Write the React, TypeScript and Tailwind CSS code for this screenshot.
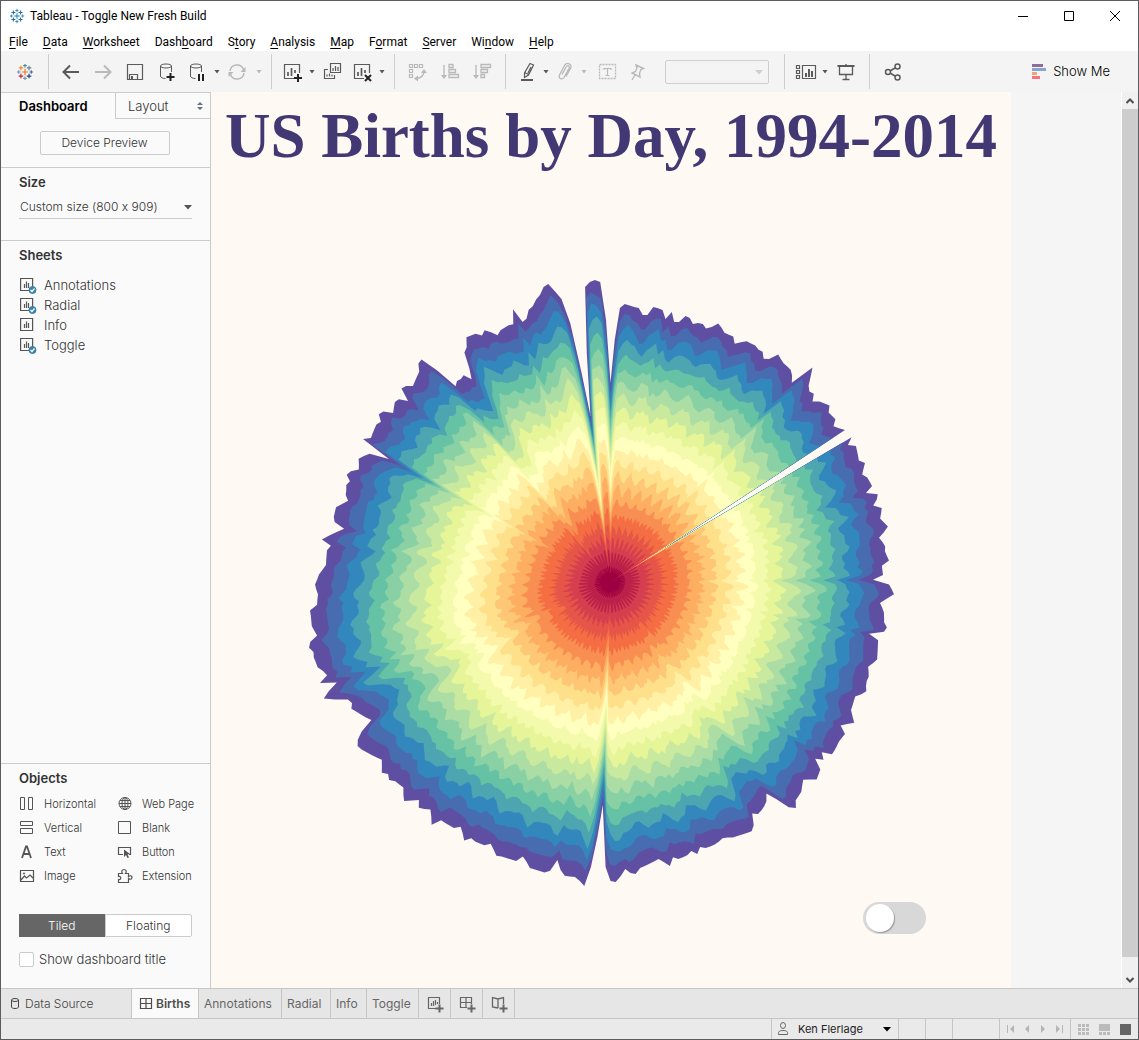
import React, { useState } from 'react';

/* ---------- radial chart data ---------- */

const YEARS = [1994, 1995, 1996, 1997, 1998, 1999, 2000, 2001, 2002, 2003, 2004, 2005, 2006, 2007, 2008, 2009, 2010, 2011, 2012, 2013, 2014];

const SPECTRAL = [
  '#9e0142', '#ba2049', '#d53e4f', '#e55649', '#f46d43', '#f98e52', '#fdae61',
  '#fec776', '#fee08b', '#fff0a5', '#ffffbf', '#f3faac', '#e6f598', '#c9e99e',
  '#abdda4', '#89d0a5', '#66c2a5', '#4ca5b1', '#3288bd', '#486cb0', '#5e4fa2',
];

const CX = 310.5;
const CY = 312;

// totals for all years, as points on the outer edge, clockwise from Jan 1
const OUTER: number[][] = [
  [311, 113], [316, 70], [321, 38], [325, 34], [334, 37], [339, 38], [343, 45], [348, 45], [354, 37], [363, 40],
  [366, 49], [372, 42], [374, 52], [379, 52], [386, 46], [390, 48], [393, 54], [398, 53], [403, 54], [407, 59],
  [419, 54], [425, 63], [434, 67], [435, 74], [442, 73], [448, 72], [456, 76], [459, 80], [463, 82], [464, 89],
  [469, 89], [479, 85], [482, 92], [482, 96], [488, 97], [492, 101], [492, 113], [513, 98], [508, 115], [509, 121],
  [514, 124], [513, 132], [520, 132], [529, 135], [529, 143], [536, 150], [534, 157], [545, 160], [552, 168], [548, 175],
  [556, 176], [559, 191], [565, 193], [562, 204], [567, 207], [572, 216], [566, 223], [578, 225], [577, 230], [573, 235],
  [582, 239], [580, 248], [588, 257], [579, 268], [585, 275], [585, 282], [589, 291], [582, 298], [583, 305], [573, 310],
  [589, 314], [594, 324], [580, 333], [584, 342], [584, 353], [587, 357], [584, 362], [569, 364], [578, 371], [577, 390],
  [568, 397], [569, 406], [566, 413], [566, 422], [555, 427], [551, 440], [554, 453], [541, 455], [545, 464], [540, 470],
  [533, 483], [522, 482], [524, 489], [515, 489], [520, 500], [517, 509], [503, 510], [501, 522], [496, 530], [496, 538],
  [489, 537], [467, 523], [466, 535], [458, 544], [453, 543], [454, 555], [452, 561], [434, 567], [423, 568], [416, 574],
  [406, 578], [400, 577], [397, 584], [391, 581], [388, 585], [379, 589], [374, 587], [370, 596], [359, 589], [340, 598],
  [336, 604], [332, 603], [326, 599], [316, 612], [311, 611], [307, 597], [305, 560], [303, 535], [298, 567], [292, 597],
  [285, 616], [276, 607], [266, 606], [261, 600], [258, 590], [251, 601], [243, 602], [230, 598], [224, 587], [216, 591],
  [203, 587], [197, 586], [191, 574], [186, 576], [174, 571], [171, 568], [165, 571], [161, 557], [154, 558], [142, 551],
  [132, 555], [131, 540], [119, 538], [119, 530], [104, 531], [103, 517], [96, 512], [90, 511], [88, 504], [82, 503],
  [82, 490], [59, 478], [58, 470], [62, 462], [72, 451], [51, 438], [52, 433], [48, 430], [24, 429], [23, 427],
  [37, 413], [20, 413], [27, 405], [17, 395], [14, 388], [13, 380], [9, 377], [10, 371], [17, 365], [12, 357],
  [11, 347], [10, 340], [17, 333], [18, 325], [15, 315], [19, 305], [26, 295], [27, 280], [31, 275], [22, 269],
  [44, 259], [35, 250], [34, 246], [36, 237], [48, 231], [46, 224], [47, 213], [50, 211], [47, 204], [51, 201],
  [59, 199], [59, 188], [65, 184], [70, 183], [89, 189], [63, 169], [71, 168], [76, 155], [80, 153], [79, 144],
  [83, 142], [93, 143], [95, 132], [99, 129], [108, 131], [102, 118], [106, 116], [113, 116], [119, 102], [119, 93],
  [122, 89], [156, 116], [157, 111], [161, 109], [164, 105], [172, 109], [170, 98], [165, 82], [167, 77], [167, 67],
  [175, 64], [183, 65], [185, 60], [198, 65], [201, 60], [209, 55], [214, 54], [214, 39], [223, 52], [226, 49],
  [231, 39], [238, 29], [244, 17], [248, 14], [262, 29], [271, 53], [282, 103], [291, 146], [287, 83], [286, 17],
  [292, 12], [296, 10], [301, 12], [307, 50],
];

const DAYS = 366;
const FEB_29 = 59;

const polar = OUTER.map(([x, y], i) => {
  let day = (Math.atan2(x - CX, CY - y) / (2 * Math.PI)) * DAYS;
  if (day < 0 && i > 0) day += DAYS;
  return { day, r: Math.hypot(x - CX, y - CY) };
}).sort((a, b) => a.day - b.day);

function radiusAt(day: number) {
  const near = polar.find((p) => Math.abs(p.day - day) < 0.5);
  if (near) return near.r;
  const after = polar.find((p) => p.day > day) ?? { day: DAYS, r: polar[0].r };
  const before = [...polar].reverse().find((p) => p.day <= day) ?? polar[0];
  const t = (day - before.day) / (after.day - before.day || 1);
  return before.r + (after.r - before.r) * t;
}

const WEEKDAY = [0.7, 1.04, 1.13, 1.12, 1.12, 1.11, 0.78];

function birthsOn(year: number, day: number) {
  const leap = year % 4 === 0;
  if (day === FEB_29 && !leap) return 0;
  const date = new Date(Date.UTC(2000, 0, 1 + day));
  const m = date.getUTCMonth();
  const d = date.getUTCDate();
  const dow = new Date(Date.UTC(year, m, d)).getUTCDay();
  if ((m === 0 && d === 1) || (m === 6 && d === 4) || (m === 11 && d === 25)) return 0.6;
  if (m === 8 && dow === 1 && d <= 7) return 0.7; // Labor Day
  if (m === 4 && dow === 1 && d >= 25) return 0.7; // Memorial Day
  if (m === 10 && dow === 4 && d >= 22 && d <= 28) return 0.65; // Thanksgiving
  if (m === 10 && dow === 5 && d >= 23 && d <= 29) return 0.8;
  return WEEKDAY[dow];
}

const rings: string[] = YEARS.map(() => '');
for (let day = 0; day < DAYS; day++) {
  const births = YEARS.map((y) => birthsOn(y, day));
  const total = births.reduce((a, b) => a + b, 0);
  const outer = day === FEB_29 ? 66 : radiusAt(day);
  const angle = (day / DAYS) * 2 * Math.PI;
  let sum = 0;
  births.forEach((b, i) => {
    sum += b;
    const r = (outer * sum) / total;
    rings[i] += `${(CX + r * Math.sin(angle)).toFixed(1)},${(CY - r * Math.cos(angle)).toFixed(1)} `;
  });
}

function RadialChart() {
  return (
    <svg viewBox="11 0 600 630" className="mx-auto block w-[600px] max-w-full overflow-visible" role="img" aria-label="Radial">
      {rings
        .map((points, i) => <polygon key={YEARS[i]} points={points} fill={SPECTRAL[i]} />)
        .reverse()}
    </svg>
  );
}

/* ---------- icons ---------- */

type IconProps = { children: React.ReactNode; size?: string; box?: string };

function Icon({ children, size = 'size-5', box = '0 0 20 20' }: IconProps) {
  return (
    <svg viewBox={box} className={`${size} shrink-0`} fill="none" stroke="currentColor" aria-hidden="true">
      {children}
    </svg>
  );
}

function TableauMark({ colors, size }: { colors: string[]; size: string }) {
  const arms = [
    [10, 10, 3.5], [10, 3, 2], [10, 17, 2], [3, 10, 2], [17, 10, 2],
    [5.5, 5.5, 2.5], [14.5, 5.5, 2.5], [5.5, 14.5, 2.5], [14.5, 14.5, 2.5],
  ];
  return (
    <svg viewBox="0 0 20 20" className={size} aria-hidden="true" strokeWidth="1.3">
      {arms.map(([x, y, s], i) => (
        <path key={i} d={`M${x - s} ${y}h${s * 2}M${x} ${y - s}v${s * 2}`} stroke={colors[i]} />
      ))}
    </svg>
  );
}

const BLUE_MARK = ['#2f7fb8', '#4b8fb5', '#4b8fb5', '#4b8fb5', '#4b8fb5', '#1f6fa3', '#1f6fa3', '#1f6fa3', '#1f6fa3'];
const COLOR_MARK = ['#e8762c', '#5b879b', '#7199a6', '#7d8fc0', '#5b6591', '#eb912c', '#59879b', '#c72035', '#1f447e'];

const BackIcon = () => <Icon><path strokeWidth="2" d="M17 10H2M8 3.500L1.500 10 8 16.500" /></Icon>;
const ForwardIcon = () => <Icon><path strokeWidth="2" d="M1 10h15M10 3.500l6.500 6.500-6.500 6.500" /></Icon>;
const SaveIcon = () => (
  <Icon>
    <path strokeWidth="1.200" d="M1.500 2.500h15v15h-15zM3.500 17v-4.500h8V17" />
    <path d="M5 14h2v3H5z" fill="currentColor" stroke="none" />
  </Icon>
);
const Cylinder = () => (
  <>
    <ellipse cx="8" cy="4" rx="5.500" ry="2" />
    <path d="M2.500 4v10c0 1.500 2 2.500 5 2.500M13.500 4v6" />
  </>
);
const AddDataIcon = () => <Icon><Cylinder /><path stroke="#222" strokeWidth="2" d="M8.500 15h8M12.500 11v8" /></Icon>;
const PauseDataIcon = () => <Icon><Cylinder /><path stroke="#222" strokeWidth="2" d="M11 12v7M15 12v7" /></Icon>;
const RefreshIcon = () => (
  <Icon>
    <path strokeWidth="1.500" d="M2 9a7 7 0 0 1 13.500-1.500M16 11a7 7 0 0 1-13.500 1.500" />
    <path d="M17.500 5v5h-5zM.5 15v-5h5z" fill="currentColor" stroke="none" />
  </Icon>
);
const BarsInFrame = () => (
  <>
    <path strokeWidth="1.200" d="M11 16.500H1.500v-14h15V11" />
    <path strokeWidth="1.700" d="M5 10v4M8.500 6v8M12 8v3" />
  </>
);
const NewSheetIcon = () => <Icon><BarsInFrame /><path stroke="#222" strokeWidth="2" d="M11 16h8M15 12v8" /></Icon>;
const ClearSheetIcon = () => <Icon><BarsInFrame /><path stroke="#222" strokeWidth="2" d="M12 13l6 6M18 13l-6 6" /></Icon>;
const DuplicateIcon = () => (
  <Icon>
    <path strokeWidth="1.200" d="M7.500 1.500h10v9h-10zM5 7.500H1.500v9h10V13M10 6v3M12.500 4v5M15 5v4M4 12.500v2M6.500 11.500v3M9 12.500v2" />
  </Icon>
);
const SwapIcon = () => (
  <Icon>
    <path strokeWidth="1.200" d="M1.500 2.500h3v3h-3zM6.500 2.500h3v3h-3zM11.500 2.500h3v3h-3zM1.500 7.500h3v3h-3zM1.500 12.500h3v3h-3z" />
    <path strokeWidth="1.500" d="M16 9c0 4-3 7-8 7.500" />
    <path d="M13 11l3-4 3 4zM10 13.500v6L6 16.500z" fill="currentColor" stroke="none" />
  </Icon>
);
const SortAscIcon = () => (
  <Icon>
    <path strokeWidth="1.300" d="M4 3v12M9 2.500h4v3H9zM9 7.500h6.500v3H9zM9 12.500h9.500v3H9z" />
    <path d="M1 13h6l-3 4z" fill="currentColor" stroke="none" />
  </Icon>
);
const SortDescIcon = () => (
  <Icon>
    <path strokeWidth="1.300" d="M4 3v12M9 2.500h9.500v3H9zM9 7.500h6.500v3H9zM9 12.500h3.500v3H9z" />
    <path d="M1 13h6l-3 4z" fill="currentColor" stroke="none" />
  </Icon>
);
const HighlightIcon = () => (
  <Icon>
    <path strokeWidth="1.200" d="M13 1.500l3.500 1.500-5 10-4 2.500v-4.500zM7.500 10.500l4 2M14 5l-3 6" />
    <path strokeWidth="2" d="M4 18h12" />
  </Icon>
);
const ClipIcon = () => (
  <Icon>
    <path
      strokeWidth="1.300"
      d="M7 12.500l4-7.500c1.500-2.500 4-1 3 1.500l-5 9c-1.500 2.500-6 1.500-4.500-2.500l5-9.500c2.500-4 8-1.500 6 3l-4.500 8"
    />
  </Icon>
);
const TextBoxIcon = () => (
  <Icon size="h-5 w-[22px]" box="0 0 22 20">
    <path strokeWidth="1.300" strokeDasharray="2 1" d="M3.500 2.500h16v14h-16z" />
    <path strokeWidth="1.200" d="M8 8V6.500h7V8M11.500 6.500v7M9.500 13.500h4" />
  </Icon>
);
const PinIcon = () => (
  <Icon>
    <path strokeWidth="1.400" d="M9 3l7.500 3.500-2.500 1-1.500 3.500.5 4-8-4 3.500-1.500L10 6zM8 13l-3 5" />
  </Icon>
);
const FitIcon = () => (
  <Icon size="h-5 w-6" box="0 0 24 20">
    <path strokeWidth="1.200" d="M2.500 3.500h3v3h-3zM2.500 8.500h3v3h-3zM2.500 13.500h3v3h-3zM8.500 3.500h13v13h-13z" />
    <path strokeWidth="2" d="M12 11v4M15 7v8M18 9v6" />
  </Icon>
);
const PresentIcon = () => (
  <Icon>
    <path strokeWidth="2" d="M1.500 4h17" />
    <path strokeWidth="1.300" d="M3.500 4v8.500h13V4M10 2v2M10 12.500V17M6.500 17.500h7" />
  </Icon>
);
const ShareIcon = () => (
  <Icon>
    <g strokeWidth="1.500">
      <circle cx="5" cy="10" r="2.500" /><circle cx="14.500" cy="4.500" r="2.500" /><circle cx="14.500" cy="15.500" r="2.500" />
      <path d="M7 9l5-3M7 11l5 3" />
    </g>
  </Icon>
);
const ShowMeIcon = () => (
  <svg viewBox="0 0 16 16" className="size-4" aria-hidden="true">
    <path fill="#8a6d9c" d="M1 0h11v3H1z" /><path fill="#86a4cc" d="M1 4h14v3H1z" />
    <path fill="#f5a27c" d="M1 8h5v3H1z" /><path fill="#f9707f" d="M1 12h8v3H1z" />
  </svg>
);

function SheetIcon({ used }: { used?: boolean }) {
  return (
    <Icon size="size-[17px]" box="0 0 17 17">
      <path strokeWidth="1.200" d="M.6 1.500h12v12H.6zM4.500 7v4M6.500 4.500V11M8.500 6v5" />
      {used && (
        <>
          <circle cx="12.500" cy="13" r="3.500" fill="#3b82a8" stroke="#3b82a8" />
          <path stroke="#fff" strokeWidth="1.200" d="M10.500 13l1.500 1.500 2.500-3" />
        </>
      )}
    </Icon>
  );
}

const TabDataIcon = () => <Icon size="size-4" box="0 0 16 16"><ellipse cx="8" cy="4" rx="3.500" ry="1.500" /><path d="M4.500 4v7c0 2 7 2 7 0V4" /></Icon>;
const TabGridIcon = () => <Icon size="size-4" box="0 0 16 16"><path strokeWidth="1.200" d="M2.500 2.500h11v10h-11zM2.500 7.500h11M8 2.500v10" /></Icon>;
const NewTabSheet = () => <Icon><path strokeWidth="1.200" d="M11 14.500H2.500v-11h11V10M5.500 9v3M7.500 7v5M9.500 6v5M11.500 8v2" /><path strokeWidth="2" d="M9.500 14.500h8M13.500 10.500v8" /></Icon>;
const NewTabDash = () => <Icon><path strokeWidth="1.200" d="M9 13.500H2.500v-10h11V10M2.500 8.500h11M8 3.500v10" /><path strokeWidth="2" d="M9.500 14.500h8M13.500 10.500v8" /></Icon>;
const NewTabStory = () => <Icon><path strokeWidth="1.300" d="M8 14l-5.500-1V3.500L8 5l5.500-1.500V10M8 5v9" /><path strokeWidth="2" d="M9.500 14.500h8M13.500 10.500v8" /></Icon>;

const OBJECTS = [
  { name: 'Horizontal', icon: <path d="M1.500 1.500h4v12h-4zM9.500 1.500h4v12h-4z" /> },
  { name: 'Web Page', icon: <g><circle cx="8" cy="7.500" r="6" /><ellipse cx="8" cy="7.500" rx="3" ry="6" /><path d="M8 1.500v12M2 7.500h12M3 4.500h10M3 10.500h10" /></g> },
  { name: 'Vertical', icon: <path d="M1.500 1.500h12v4h-12zM1.500 8.500h12v5h-12z" /> },
  { name: 'Blank', icon: <path d="M1.500 1.500h12v12h-12z" /> },
  { name: 'Text', icon: <path strokeWidth="1.800" d="M3 14L7 2.500h1L12 14M4.500 10h6" /> },
  { name: 'Button', icon: <g><path strokeWidth="1.200" d="M6 10.500H1.500v-7h12v7H12" /><path fill="currentColor" stroke="none" d="M7 5.500l6 4.500-2.500.5 1.500 3-1.500.5-1.500-3L7 13z" /></g> },
  { name: 'Image', icon: <g><path strokeWidth="1.200" d="M1.500 2.500h13v11h-13zM2 12l3.500-4 2 2 3.500-3 3.500 3.500" /><circle cx="5" cy="5.500" r=".7" /></g> },
  { name: 'Extension', icon: <path strokeWidth="1.200" d="M1.500 7.500v-2h4c-1.500-2-.5-4 1.500-4s3 2 1.500 4h3v3c2-1.500 3.500-.5 3.500 1s-1.500 2.500-3.500 1v4h-10v-3c3 1 3-4 0-3z" /> },
];

/* ---------- toolbar ---------- */

function ToolButton({ label, dim, narrow, children }: { label: string; dim?: boolean; narrow?: boolean; children: React.ReactNode }) {
  return (
    <button
      title={label}
      aria-label={label}
      className={`flex h-8 items-center justify-center ${narrow ? 'w-7' : 'w-8'} ${dim ? 'text-[#b9b9b9]' : 'text-[#5a5a5a]'}`}
    >
      {children}
    </button>
  );
}

function Caret({ label, dim }: { label: string; dim?: boolean }) {
  return (
    <button aria-label={label} className={`flex h-8 w-[10px] items-center justify-center ${dim ? 'text-[#b9b9b9]' : 'text-[#555]'}`}>
      <svg viewBox="0 0 6 4" className="h-1 w-[6px]" aria-hidden="true"><path d="M.5 0h5L3 3.500z" fill="currentColor" /></svg>
    </button>
  );
}

function Group({ children }: { children: React.ReactNode }) {
  return <div className="flex h-[35px] items-center border-l border-[#cfcfcf] px-[7px]">{children}</div>;
}

function Toolbar() {
  return (
    <div role="toolbar" className="flex h-[41px] shrink-0 items-center bg-[#f4f4f4]">
      <button aria-label="Start page" className="flex w-[47px] items-center justify-center">
        <TableauMark colors={COLOR_MARK} size="size-[18px]" />
      </button>
      <Group>
        <ToolButton label="Back"><BackIcon /></ToolButton>
        <ToolButton label="Forward" dim><ForwardIcon /></ToolButton>
        <ToolButton label="Save"><SaveIcon /></ToolButton>
        <ToolButton label="New data source"><AddDataIcon /></ToolButton>
        <ToolButton label="Pause updates" narrow><PauseDataIcon /></ToolButton>
        <Caret label="Update options" />
        <ToolButton label="Refresh" dim><RefreshIcon /></ToolButton>
        <Caret label="Refresh options" dim />
      </Group>
      <Group>
        <ToolButton label="New worksheet" narrow><NewSheetIcon /></ToolButton>
        <Caret label="New options" />
        <ToolButton label="Duplicate"><DuplicateIcon /></ToolButton>
        <ToolButton label="Clear sheet" narrow><ClearSheetIcon /></ToolButton>
        <Caret label="Clear options" />
      </Group>
      <Group>
        <ToolButton label="Swap" dim><SwapIcon /></ToolButton>
        <ToolButton label="Sort ascending" dim><SortAscIcon /></ToolButton>
        <ToolButton label="Sort descending" dim><SortDescIcon /></ToolButton>
      </Group>
      <Group>
        <ToolButton label="Highlight" narrow><HighlightIcon /></ToolButton>
        <Caret label="Highlight options" />
        <ToolButton label="Group" dim narrow><ClipIcon /></ToolButton>
        <Caret label="Group options" dim />
        <div className="ml-1 flex">
          <ToolButton label="Mark labels" dim narrow><TextBoxIcon /></ToolButton>
          <ToolButton label="Fix axes" dim><PinIcon /></ToolButton>
        </div>
        <div className="relative mx-2 ml-3">
          <select aria-label="Fit" disabled className="block h-6 w-[104px] appearance-none rounded-xs border border-[#cfcfcf] bg-transparent" />
          <svg viewBox="0 0 8 5" className="pointer-events-none absolute right-[6px] top-[10px] h-[5px] w-2" aria-hidden="true">
            <path d="M0 0h8L4 4.500z" fill="#cfcfcf" />
          </svg>
        </div>
      </Group>
      <Group>
        <ToolButton label="Show cards" narrow><FitIcon /></ToolButton>
        <Caret label="Card options" />
        <ToolButton label="Presentation mode"><PresentIcon /></ToolButton>
      </Group>
      <Group>
        <ToolButton label="Share"><ShareIcon /></ToolButton>
      </Group>
      <button className="ml-auto mr-7 flex items-center gap-[6px] text-[13px] font-light text-black">
        <ShowMeIcon />
        Show Me
      </button>
    </div>
  );
}

/* ---------- window frame ---------- */

const MENUS = [
  ['', 'F', 'ile'], ['', 'D', 'ata'], ['', 'W', 'orksheet'], ['Dash', 'b', 'oard'], ['S', 't', 'ory'], ['', 'A', 'nalysis'],
  ['', 'M', 'ap'], ['F', 'o', 'rmat'], ['', 'S', 'erver'], ['Wi', 'n', 'dow'], ['', 'H', 'elp'],
];

function TitleBar() {
  return (
    <header className="shrink-0 bg-white font-[Roboto,'Noto_Sans',sans-serif] text-xs text-black">
      <div className="flex h-[29px] items-center pl-2">
        <TableauMark colors={BLUE_MARK} size="size-4" />
        <span className="ml-[5px]">Tableau - Toggle New Fresh Build</span>
        <div className="ml-auto flex">
          <button aria-label="Minimize" className="flex w-[46px] justify-center"><svg viewBox="0 0 10 10" className="size-[10px]" stroke="#000"><path d="M0 5.500h10" /></svg></button>
          <button aria-label="Maximize" className="flex w-[46px] justify-center"><svg viewBox="0 0 10 10" className="size-[10px]" stroke="#000" fill="none"><path d="M.5.500h9v9H.500z" /></svg></button>
          <button aria-label="Close" className="flex w-[46px] justify-center"><svg viewBox="0 0 10 10" className="size-[10px]" stroke="#000"><path d="M0 0l10 10M10 0L0 10" /></svg></button>
        </div>
      </div>
      <nav className="flex h-[21px] items-center gap-[15px] pl-2 pt-[2px]">
        {MENUS.map(([a, key, b]) => (
          <button key={a + key + b}>{a}<u className="underline-offset-2">{key}</u>{b}</button>
        ))}
      </nav>
    </header>
  );
}

/* ---------- side panel ---------- */

const SHEETS = [
  { name: 'Annotations', used: true },
  { name: 'Radial', used: true },
  { name: 'Info', used: false },
  { name: 'Toggle', used: true },
];

function SidePanel() {
  const [showTitle, setShowTitle] = useState(false);
  return (
    <aside className="flex w-[210px] shrink-0 flex-col border-r border-t border-[#cbcbcb] bg-[#fafafa] text-[13px] font-light leading-5 text-[#333]">
      <div className="flex h-[26px] shrink-0">
        <button className="w-[114px] pl-[18px] text-left font-semibold text-black">Dashboard</button>
        <button className="flex flex-1 items-center justify-between border-b border-l border-[#cbcbcb] pl-3 pr-[7px]">
          Layout
          <svg viewBox="0 0 6 8" className="h-2 w-[6px]" fill="#5f7080" aria-hidden="true"><path d="M0 3h6L3 0zM0 5h6L3 8z" /></svg>
        </button>
      </div>
      <div className="flex h-[49px] shrink-0 items-center justify-center border-b border-[#cbcbcb] pr-[2px]">
        <button className="h-6 w-[130px] rounded-xs border border-[#cbcbcb] text-xs">Device Preview</button>
      </div>
      <section className="h-[73px] shrink-0 border-b border-[#cbcbcb] px-[18px] pt-1">
        <label htmlFor="size" className="block font-semibold text-[#333]">Size</label>
        <div className="relative mt-[3px]">
          <select id="size" className="h-6 w-full appearance-none border-b border-[#cbcbcb] bg-transparent pl-px text-xs [font-feature-settings:'calt'_0]">
            <option>Custom size (800 x 909)</option>
          </select>
          <svg viewBox="0 0 8 5" className="pointer-events-none absolute right-0 top-[10px] h-[5px] w-2" aria-hidden="true"><path d="M0 0h8L4 4.500z" fill="#555" /></svg>
        </div>
      </section>
      <section className="flex-1 px-[18px] pt-1">
        <h2 className="mb-[10px] font-semibold text-[#333]">Sheets</h2>
        <ul>
          {SHEETS.map((s) => (
            <li key={s.name} className="flex items-center gap-[7px] pl-px">
              <span className="text-[#555]"><SheetIcon used={s.used} /></span>
              {s.name}
            </li>
          ))}
        </ul>
      </section>
      <section className="h-[225px] shrink-0 border-t border-[#cbcbcb] px-[18px] pt-1">
        <h2 className="mb-1 font-semibold text-[#333]">Objects</h2>
        <ul className="grid grid-cols-[98px_1fr] text-[11px]">
          {OBJECTS.map((o) => (
            <li key={o.name} className="flex h-6 items-center gap-2 whitespace-nowrap">
              <span className="text-[#555]"><Icon size="h-4 w-[17px]" box="0 0 17 16">{o.icon}</Icon></span>
              {o.name}
            </li>
          ))}
        </ul>
        <div className="mt-[26px] flex h-[23px] text-xs">
          <button className="flex-1 bg-[#666] text-white">Tiled</button>
          <button className="flex-1 rounded-r-xs border border-[#cbcbcb] bg-white">Floating</button>
        </div>
        <label className="mt-3 flex items-center gap-[5px]">
          <input
            type="checkbox"
            checked={showTitle}
            onChange={(e) => setShowTitle(e.target.checked)}
            className="size-[15px] appearance-none rounded-xs border border-[#cbcbcb] bg-white checked:bg-[#666]"
          />
          Show dashboard title
        </label>
      </section>
    </aside>
  );
}

/* ---------- dashboard ---------- */

function Dashboard() {
  const [info, setInfo] = useState(false);
  return (
    <main className="flex min-w-0 flex-1 overflow-hidden bg-[#f5f5f5]">
      <div className="h-[909px] w-[800px] bg-[#fef9f2]">
        <h1 className="h-[90px] whitespace-nowrap text-center font-['Liberation_Serif',serif] text-[63px] font-bold leading-[88px] text-[#423873]">
          US Births by Day, 1994-2014
        </h1>
        <div className="mt-[88px]">
          <RadialChart />
        </div>
        <div className="mt-[2px] flex justify-end pr-[85px]">
          <label className="flex h-8 w-[63px] items-center rounded-full bg-[#d8d8d8] px-[3px]">
            <input
              type="checkbox"
              role="switch"
              aria-label="Info"
              checked={info}
              onChange={(e) => setInfo(e.target.checked)}
              className="size-7 appearance-none rounded-full bg-white shadow-[1px_1px_1px_#999] checked:ml-auto"
            />
          </label>
        </div>
      </div>
      <div className="ml-auto flex w-[17px] flex-col border-l border-white bg-[#f0f0f0]">
        <button aria-label="Scroll up" className="flex h-[17px] items-center justify-center">
          <svg viewBox="0 0 8 6" className="h-[6px] w-2" fill="none" stroke="#505050" strokeWidth="2"><path d="M.5 5L4 1.500 7.500 5" /></svg>
        </button>
        <div className="flex-1 bg-[#cdcdcd]" />
        <button aria-label="Scroll down" className="mt-[14px] flex h-[17px] items-center justify-center">
          <svg viewBox="0 0 8 6" className="h-[6px] w-2" fill="none" stroke="#505050" strokeWidth="2"><path d="M.5 1L4 4.500 7.500 1" /></svg>
        </button>
      </div>
    </main>
  );
}

/* ---------- bottom bars ---------- */

function SheetTabs() {
  const tab = 'flex items-center border-r border-[#c6c6c6]';
  return (
    <nav className="flex h-[30px] shrink-0 border-t border-[#c6c6c6] bg-[#e6e6e6] text-xs text-[#666]">
      <button className="flex w-[131px] items-center gap-[2px] border-r border-[#c6c6c6] pl-[6px] font-light text-[#444]">
        <TabDataIcon />
        Data Source
      </button>
      <button className="flex w-[67px] items-center gap-[2px] border-r border-[#c6c6c6] bg-[#fafafa] pl-[6px] font-semibold text-[#4e4e4e]">
        <TabGridIcon />
        Births
      </button>
      <button className={`${tab} w-[83px] pl-[5px]`}>Annotations</button>
      <button className={`${tab} w-[49px] pl-[5px]`}>Radial</button>
      <button className={`${tab} w-9 pl-[5px]`}>Info</button>
      <button className={`${tab} w-[52px] pl-[5px]`}>Toggle</button>
      <button aria-label="New worksheet" className={`${tab} w-8 pl-[7px]`}><NewTabSheet /></button>
      <button aria-label="New dashboard" className={`${tab} w-8 pl-[7px]`}><NewTabDash /></button>
      <button aria-label="New story" className={`${tab} w-8 pl-[7px]`}><NewTabStory /></button>
    </nav>
  );
}

const NAV = [
  { label: 'First', d: 'M0 0h1v8H0zM7 0v8L3 4z' },
  { label: 'Previous', d: 'M6 0v8L2 4z' },
  { label: 'Next', d: 'M2 0v8l4-4z' },
  { label: 'Last', d: 'M1 0v8l4-4zM7 0h1v8H7z' },
];

function StatusBar() {
  return (
    <footer className="flex h-[21px] shrink-0 justify-end border-t border-[#c6c6c6] bg-[#eaeaea] text-[11px] text-[#222]">
      <button className="flex w-[127px] items-center border-l border-[#c6c6c6] pl-1 pr-[7px]">
        <svg viewBox="0 0 14 16" className="mr-2 h-4 w-[14px] text-[#666]" fill="none" stroke="currentColor" aria-hidden="true">
          <ellipse cx="7" cy="4.500" rx="2.500" ry="3" /><path d="M2.500 13.500c-.5-3 1-4 4.500-4s5 1 4.500 4z" />
        </svg>
        Ken Flerlage
        <svg viewBox="0 0 8 5" className="ml-auto h-[5px] w-2" aria-hidden="true"><path d="M0 0h8L4 4.500z" /></svg>
      </button>
      <div className="w-[27px] border-l border-[#c6c6c6]" />
      <div className="w-[27px] border-l border-[#c6c6c6]" />
      <div className="w-[47px] border-l border-[#c6c6c6]" />
      <div className="flex w-[71px] items-center justify-center gap-2 border-l border-[#c6c6c6]">
        {NAV.map((n) => (
          <button key={n.label} aria-label={n.label}>
            <svg viewBox="0 0 8 8" className="block size-2" fill="#b5b5b5"><path d={n.d} /></svg>
          </button>
        ))}
      </div>
      <div className="flex w-[68px] items-center justify-center gap-[10px] border-l border-[#c6c6c6]">
        <button aria-label="Sheet sorter"><svg viewBox="0 0 11 11" className="block size-[11px]" fill="#bbb"><path d="M0 0h3v3H0zM4 0h3v3H4zM8 0h3v3H8zM0 4h3v3H0zM4 4h3v3H4zM8 4h3v3H8zM0 8h3v3H0zM4 8h3v3H4zM8 8h3v3H8z" /></svg></button>
        <button aria-label="Filmstrip"><svg viewBox="0 0 11 11" className="block size-[11px]" fill="#bbb"><path d="M0 0h11v7H0zM0 8h3v3H0zM4 8h3v3H4zM8 8h3v3H8z" /></svg></button>
        <button aria-label="Tabs"><svg viewBox="0 0 11 11" className="block size-[11px]" fill="#666"><path d="M0 0h11v11H0z" /></svg></button>
      </div>
    </footer>
  );
}

export default function App() {
  return (
    <div className="flex h-screen flex-col overflow-hidden border border-[#5c5c5e] font-[Inter,'Open_Sans',sans-serif]">
      <TitleBar />
      <Toolbar />
      <div className="flex min-h-0 flex-1">
        <SidePanel />
        <Dashboard />
      </div>
      <SheetTabs />
      <StatusBar />
    </div>
  );
}
